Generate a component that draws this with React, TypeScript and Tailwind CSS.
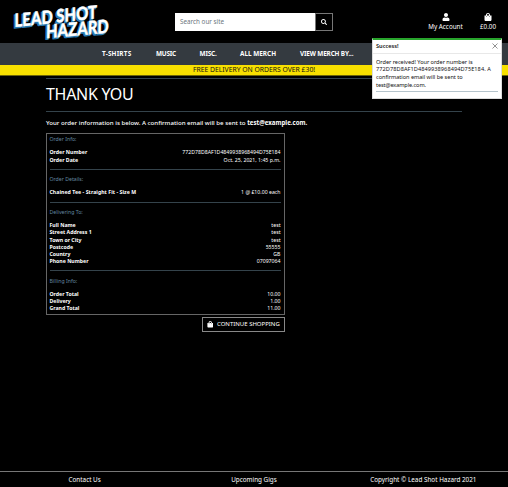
import React from "react";
import { FaSearch, FaUser, FaShoppingBag } from "react-icons/fa";

type Entry = [string, string];

const delivery: Entry[] = [
  ["Full Name", "test"],
  ["Street Address 1", "test"],
  ["Town or City", "test"],
  ["Postcode", "55555"],
  ["Country", "GB"],
  ["Phone Number", "07097064"],
];

function LogoWords() {
  return (
    <>
      <text transform="translate(14.5 27) rotate(-6) skewX(-6)" fontSize="18" textLength="83" lengthAdjust="spacingAndGlyphs">LEAD SHOT</text>
      <text transform="translate(46 38.2) rotate(-5) skewX(-6)" fontSize="18.5" textLength="63" lengthAdjust="spacingAndGlyphs">HAZARD</text>
    </>
  );
}

function Logo() {
  return (
    <svg className="block h-[43px] w-[120px] overflow-visible" viewBox="0 0 120 43" fontFamily="Lato, 'Liberation Sans', sans-serif" fontWeight="900">
      <g transform="translate(-1.2 1.3)" fill="#2b7db5" stroke="#2b7db5" strokeWidth="1.2">
        <LogoWords />
      </g>
      <g fill="#ffffff" stroke="#ffffff" strokeWidth="0.4">
        <LogoWords />
      </g>
    </svg>
  );
}

function Rows({ items }: { items: Entry[] }) {
  return (
    <div>
      {items.map(([label, value]) => (
        <div key={label} className="flex h-[7.2px] items-center justify-between leading-[7px]">
          <span className={label.length > 20 ? "font-bold tracking-[0.04px]" : "font-bold"}>{label}</span>
          <span>{value}</span>
        </div>
      ))}
    </div>
  );
}

function Heading({ children }: { children: React.ReactNode }) {
  return <div className="h-[7px] leading-[7px] text-[#6388a0]">{children}</div>;
}

function Rule() {
  return <div className="h-px bg-[#34434b]" />;
}

export default function App() {
  return (
    <div className="relative flex h-[487px] w-[508px] flex-col overflow-hidden bg-black font-['Noto_Sans','Open_Sans',sans-serif] text-white">
      <header className="flex h-[43px] shrink-0">
        <div className="w-[175px]">
          <Logo />
        </div>
        <div className="mt-[13px] flex h-[18px] w-[158px]">
          <div className="flex w-[140px] items-center bg-white pl-[5px] text-[6.3px] text-[#6c757d]">Search our site</div>
          <div className="flex flex-1 items-center justify-center border border-[#777] bg-black">
            <FaSearch size={6} />
          </div>
        </div>
        <div className="ml-[93px] mt-[12.5px] flex w-[39px] flex-col items-center text-[6.3px] leading-[9px]">
          <FaUser size={8} />
          <span className="mt-[1.5px] whitespace-nowrap">My Account</span>
        </div>
        <div className="ml-[13px] mt-[12.5px] flex w-[20px] flex-col items-center text-[6.3px] leading-[9px]">
          <FaShoppingBag size={8} />
          <span className="mt-[1.5px]">£0.00</span>
        </div>
      </header>

      <nav className="flex h-[22px] shrink-0 items-center bg-[#343a40] pl-[102px] text-[6.4px] font-bold whitespace-nowrap">
        <span className="w-[54px] tracking-[0.2px]">T-SHIRTS</span>
        <span className="w-[43.5px] tracking-[-0.2px]">MUSIC</span>
        <span className="w-[40.5px] tracking-[-0.15px]">MISC.</span>
        <span className="w-[60px]">ALL MERCH</span>
        <span className="tracking-[-0.15px]">VIEW MERCH BY...</span>
      </nav>
      <div className="flex h-[11px] shrink-0 items-center justify-center border-b border-[#6d6508] bg-[#f8e000] text-[6.8px] leading-[10px] text-[#111]">
        FREE DELIVERY ON ORDERS OVER £30!
      </div>

      <main className="ml-[46px] w-[416px] flex-1 pt-[2px]">
        <Rule />
        <h1 className="flex h-[32px] items-center pb-[2px] text-[16px] leading-[20px] tracking-[-0.3px]">THANK YOU</h1>
        <Rule />
        <p className="mt-[5.5px] h-[10px] text-[6.13px] leading-[10px] font-medium whitespace-nowrap">
          Your order information is below. A confirmation email will be sent to <strong>test@example.com.</strong>
        </p>
        <section className="mt-[5px] h-[182px] w-[239px] border border-[#666] pt-[2.5px] pr-[3.5px] pl-[2.5px] text-[5.2px]">
          <Heading>Order Info:</Heading>
          <div className="mt-[6.3px]">
            <Rows items={[["Order Number", "772D78D8AF1D4849938968494D75E184"], ["Order Date", "Oct. 25, 2021, 1:45 p.m."]]} />
          </div>
          <div className="mt-[5.5px]"><Rule /></div>
          <div className="mt-[6.2px]"><Heading>Order Details:</Heading></div>
          <div className="mt-[6px]">
            <Rows items={[["Chained Tee - Straight Fit - Size M", "1 @ £10.00 each"]]} />
          </div>
          <div className="mt-[5.3px]"><Rule /></div>
          <div className="mt-[6.2px]"><Heading>Delivering To:</Heading></div>
          <div className="mt-[6px]"><Rows items={delivery} /></div>
          <div className="mt-[5.3px]"><Rule /></div>
          <div className="mt-[6.2px]"><Heading>Billing Info:</Heading></div>
          <div className="mt-[6px]">
            <Rows items={[["Order Total", "10.00"], ["Delivery", "1.00"], ["Grand Total", "11.00"]]} />
          </div>
        </section>
        <button className="mt-[2.5px] ml-[156px] flex h-[14.5px] w-[83px] items-center border border-[#888] pl-[3.5px] text-[6px] whitespace-nowrap">
          <FaShoppingBag size={6.5} />
          <span className="ml-[4px]">CONTINUE SHOPPING</span>
        </button>
      </main>

      <footer className="grid h-[16px] shrink-0 grid-cols-3 items-center border-t border-[#777] text-center text-[6.35px]">
        <span>Contact Us</span>
        <span>Upcoming Gigs</span>
        <span>Copyright © Lead Shot Hazard 2021</span>
      </footer>

      <aside className="absolute top-[38px] left-[371.5px] h-[60.5px] w-[130.5px] border border-t-2 border-[#ddd] border-t-[#28a52c] bg-white text-[5.6px] text-[#111]">
        <div className="flex h-[13.5px] items-center justify-between border-b border-[#e8e8e8] px-[3.5px]">
          <span className="font-semibold">Success!</span>
          <svg className="size-[6px]" viewBox="0 0 6 6" stroke="#777" strokeWidth="0.8">
            <path d="M.5.5 5.5 5.5M5.5.5.5 5.5" />
          </svg>
        </div>
        <div className="px-[3.5px] pt-[5px]">
          <p className="leading-[7.9px] whitespace-nowrap">
            <span className="block tracking-[-0.04px]">Order received! Your order number is</span>
            <span className="block tracking-[0.07px]">772D78D8AF1D4849938968494D75E184. A</span>
            <span className="block tracking-[-0.03px]">confirmation email will be sent to</span>
            <span className="block tracking-[-0.1px]">test@example.com.</span>
          </p>
          <div className="mt-px h-px bg-[#b5c4cc]" />
        </div>
      </aside>
    </div>
  );
}
